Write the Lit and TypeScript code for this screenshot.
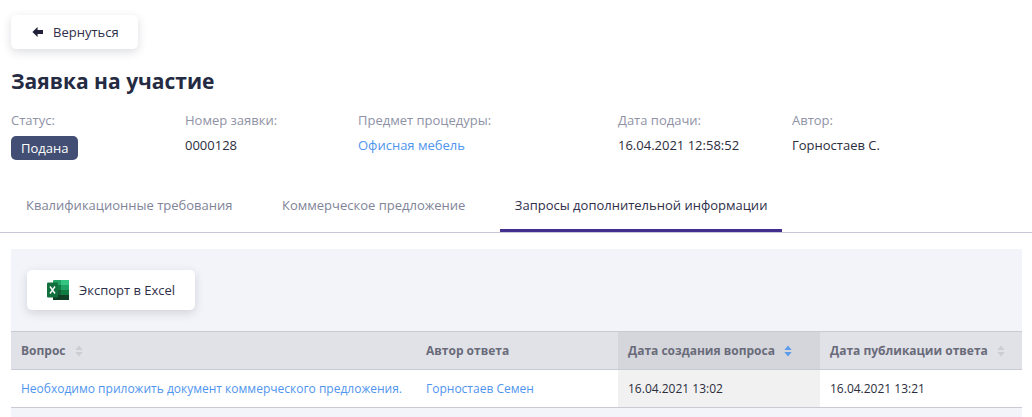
import { LitElement, html, css } from "lit";
import { customElement } from "lit/decorators.js";

const sort = (active = false) => html`<svg class="sort" width="8" height="12" viewBox="0 0 8 12">
  <path d="M4 0.5 L7.6 5 H0.4 Z" fill=${active ? "#5b9bea" : "#cbcdd4"}></path>
  <path d="M0.4 7 H7.6 L4 11.5 Z" fill=${active ? "#5b9bea" : "#cbcdd4"}></path>
</svg>`;

@customElement("app-root")
export class AppRoot extends LitElement {
  static styles = css`
    :host { display: block; width: 1032px; height: 417px; overflow: hidden; background: #fff;
      font-family: "Open Sans", sans-serif; font-size: 13px; color: #2b2d42; }
    .top { padding: 15px 11px 0; }
    .btn { display: inline-flex; align-items: center; background: #fff; border-radius: 5px;
      box-shadow: 0 3px 10px rgba(40, 45, 70, 0.16); color: #2f2f4a; }
    .back { width: 127px; height: 34px; padding-left: 21px; gap: 9px; box-sizing: border-box; }
    h1 { margin: 17px 0 0; font-size: 21px; line-height: 30px; font-weight: 700; color: #252b42; }
    .meta { display: grid; grid-template-columns: 174px 173px 260px 174px 1fr; margin-top: 15px; }
    .label { color: #8f92a6; line-height: 18px; }
    .value { margin-top: 7px; line-height: 18px; color: #2b2d3c; }
    a { color: #4f95ee; text-decoration: none; }
    .badge { display: inline-block; margin-top: 7px; background: #424e73; color: #fff; font-weight: 500;
      border-radius: 5px; height: 24px; line-height: 24px; padding: 0 10px; }
    .tabs { display: flex; gap: 19.5px; padding: 0 11px; margin-top: 24px; height: 48px; border-bottom: 1px solid #c6c8d6; }
    .tab { padding: 0 15px; line-height: 42px; color: #7f8499; border-bottom: 3px solid transparent; height: 45px; }
    .tab.on { color: #2f2f4a; border-bottom-color: #422e8c; }
    .panel { margin: 16px 10px 0 11px; background: #f3f4f9; height: 168px; }
    .tools { height: 82px; padding: 21px 0 0 16px; box-sizing: border-box; }
    .excel { width: 168px; height: 40px; padding-left: 20px; gap: 10px; box-sizing: border-box; }
    .grid { display: grid; grid-template-columns: 405px 202px 202px 202px; font-size: 12px; }
    .cell { display: flex; align-items: center; padding-left: 10px; box-sizing: border-box; white-space: nowrap; }
    .h { height: 39px; background: #e1e2e7; border-top: 1px solid #c8cad4; border-bottom: 1px solid #c8cad4;
      font-weight: 700; color: #696b7a; gap: 9px; }
    .h.sorted { background: #d5d6db; }
    .d { height: 38px; background: #fff; border-bottom: 1px solid #c8cad4; color: #2b2d3c; }
    .d.sorted { background: #f1f1f2; }
  `;

  render() {
    return html`
      <div class="top">
        <div class="btn back">
          <svg width="12" height="10" viewBox="0 0 12 10">
            <path d="M5.6 0 V3 H11 V7 H5.6 V10 L0.4 5 Z" fill="#1f2238"></path>
          </svg>
          <span>Вернуться</span>
        </div>
        <h1>Заявка на участие</h1>
        <div class="meta">
          <div><div class="label">Статус:</div><span class="badge">Подана</span></div>
          <div><div class="label">Номер заявки:</div><div class="value">0000128</div></div>
          <div><div class="label">Предмет процедуры:</div><div class="value"><a>Офисная мебель</a></div></div>
          <div><div class="label">Дата подачи:</div><div class="value">16.04.2021 12:58:52</div></div>
          <div><div class="label">Автор:</div><div class="value">Горностаев С.</div></div>
        </div>
      </div>
      <div class="tabs">
        <div class="tab">Квалификационные требования</div>
        <div class="tab">Коммерческое предложение</div>
        <div class="tab on">Запросы дополнительной информации</div>
      </div>
      <div class="panel">
        <div class="tools">
          <div class="btn excel">
            <svg width="22" height="20" viewBox="0 0 22 20">
              <rect x="6" y="0" width="16" height="20" rx="1" fill="#21a366"></rect>
              <rect x="14" y="0" width="8" height="5" fill="#33c481"></rect>
              <rect x="14" y="5" width="8" height="5" fill="#21a366"></rect>
              <rect x="6" y="5" width="8" height="5" fill="#107c41"></rect>
              <rect x="6" y="10" width="8" height="5" fill="#185c37"></rect>
              <rect x="14" y="10" width="8" height="5" fill="#107c41"></rect>
              <rect x="6" y="15" width="16" height="5" fill="#103f25"></rect>
              <rect x="0" y="2.5" width="11" height="15" rx="1" fill="#12703f"></rect>
              <path d="M3 6.5 L8 13.5 M8 6.5 L3 13.5" stroke="#fff" stroke-width="1.4" fill="none"></path>
            </svg>
            <span>Экспорт в Excel</span>
          </div>
        </div>
        <div class="grid">
          <div class="cell h">Вопрос ${sort()}</div>
          <div class="cell h">Автор ответа</div>
          <div class="cell h sorted">Дата создания вопроса ${sort(true)}</div>
          <div class="cell h">Дата публикации ответа ${sort()}</div>
          <div class="cell d"><a>Необходимо приложить документ коммерческого предложения.</a></div>
          <div class="cell d"><a>Горностаев Семен</a></div>
          <div class="cell d sorted">16.04.2021 13:02</div>
          <div class="cell d">16.04.2021 13:21</div>
        </div>
      </div>
    `;
  }
}
